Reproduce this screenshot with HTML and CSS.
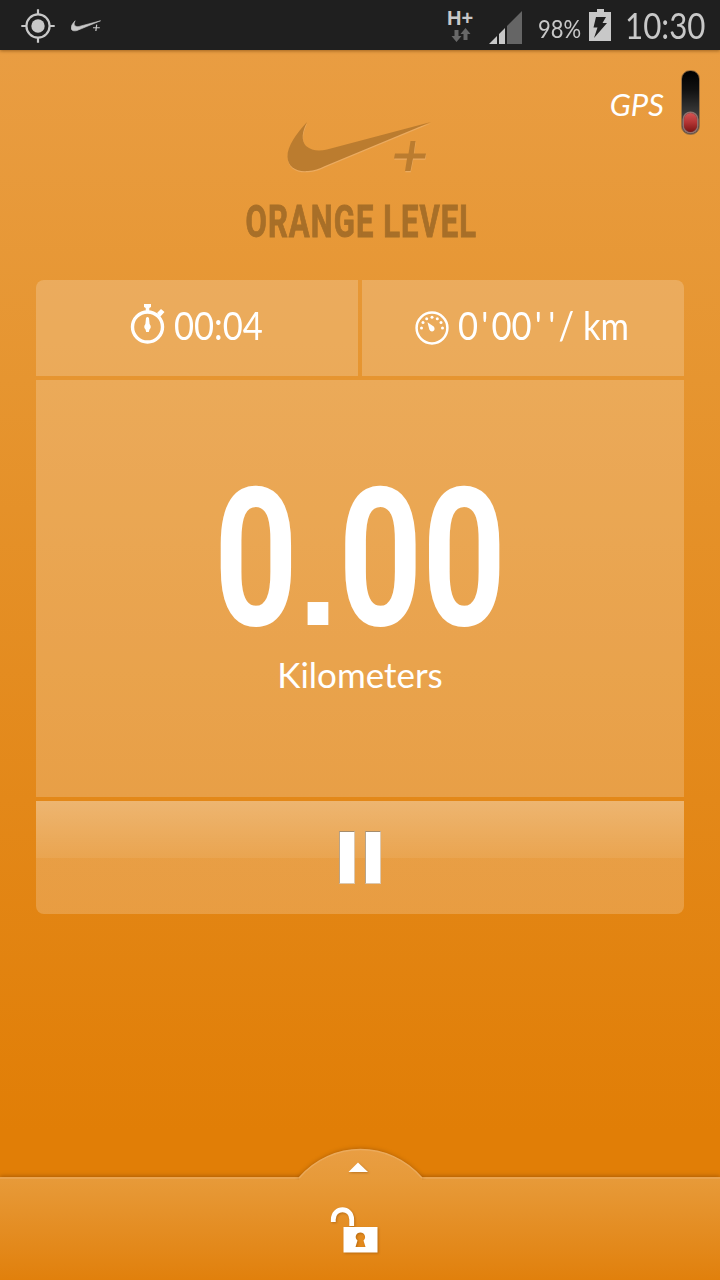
FILE: index.html
```
<!DOCTYPE html>
<html lang="en">
<head>
    <meta charset="UTF-8" />
    <meta name="viewport" content="width=device-width, initial-scale=1.0" />
    <title>Run Tracker</title>
    <link rel="stylesheet" href="styles.css">
</head>
<body>
    <div class="status-bar">
        <svg class="icon-location" width="34" height="34" viewBox="0 0 34 34">
            <circle cx="17" cy="17" r="11.6" fill="none" stroke="#c8c8c8" stroke-width="2.2" />
            <circle cx="17" cy="17" r="6.7" fill="#c8c8c8" />
            <path d="M17 .3v5M17 28.700v5M.3 17h5M28.700 17h5" stroke="#c8c8c8" stroke-width="2.200" />
        </svg>
        <svg class="icon-run" width="30" height="12" viewBox="287 121 146 53">
            <path d="M307 122C297 133 287 146 287.500 157C288 167 296 172 308 171C314 170.500 319 169 325 166L431 122L327 149.500C319 151.500 312 151 306 146C301 140 302 132 307 122Z" fill="#c8c8c8" stroke="#c8c8c8" stroke-width="3" />
            <path d="M412 141l-4 31M394 156h33" stroke="#c8c8c8" stroke-width="6" />
        </svg>
        <div class="network">
            <span class="network-type">H+</span>
            <svg width="20" height="14" viewBox="0 0 20 14">
                <path d="M3.500 2h4v6h3l-5 6-5-6h3zM12.500 12h4V6h3l-5-6-5 6h3z" fill="#686868" />
            </svg>
        </div>
        <svg class="icon-signal" width="33" height="33" viewBox="0 0 33 33">
            <path d="M0 33L8 25V33ZM10 23L16 17V33H10Z" fill="#c8c8c8" />
            <path d="M18 15L33 0V33H18Z" fill="#656565" />
        </svg>
        <div class="battery-level"><span>98%</span></div>
        <svg class="icon-battery" width="22" height="32" viewBox="0 0 22 32">
            <path d="M0 3H8V0H15V3H22V32H0Z" fill="#c8c8c8" />
            <path d="M7 8H17L13.500 14H18L5 29L8.500 18.500H4.500Z" fill="#1f1f1f" />
        </svg>
        <div class="clock"><span>10:30</span></div>
    </div>

    <div class="hero">
        <div class="gps">
            <span class="gps-label">GPS</span>
            <div class="gps-meter"><div class="gps-light"></div></div>
        </div>
        <svg class="logo" width="148" height="56" viewBox="286 119 148 56">
            <g class="logo-highlight" transform="translate(.3 1.200)">
                <path d="M307 122C297 133 287 146 287.500 157C288 167 296 172 308 171C314 170.500 319 169 325 166L431 122L327 149.500C319 151.500 312 151 306 146C301 140 302 132 307 122Z" />
                <path d="M410.500 141H415.500L413.800 153.500H426L425 158.500H413L410.500 171H405L407 158.500H394L395 153.500H408.500Z" />
            </g>
            <g fill="#bb7c2f">
                <path d="M307 122C297 133 287 146 287.500 157C288 167 296 172 308 171C314 170.500 319 169 325 166L431 122L327 149.500C319 151.500 312 151 306 146C301 140 302 132 307 122Z" />
                <path d="M410.500 141H415.500L413.800 153.500H426L425 158.500H413L410.500 171H405L407 158.500H394L395 153.500H408.500Z" />
            </g>
        </svg>
        <div class="level"><span>ORANGE LEVEL</span></div>
    </div>

    <div class="card">
        <div class="stats">
            <div class="stat time">
                <svg width="36" height="42" viewBox="0 0 36 42">
                    <circle cx="17.500" cy="24" r="15" fill="none" stroke="#fff" stroke-width="3.400" />
                    <path d="M14 1H21V4L19.300 5V8H15.700V5L14 4ZM27 10L31 6L34.500 9L30 14Z" fill="#fff" />
                    <path d="M16 15Q17.500 13 19 15L19.600 21Q22 24 19.500 26.500L18.800 29H16.200L15.500 26.500Q13 24 15.400 21Z" fill="#fff" />
                </svg>
                <span class="value">00:04</span>
            </div>
            <div class="stat pace">
                <svg width="34" height="34" viewBox="0 0 34 34">
                    <circle cx="17" cy="17" r="15.400" fill="none" stroke="#fff" stroke-width="2.500" />
                    <g fill="#fff">
                        <circle cx="6.500" cy="17" r="1.500" />
                        <circle cx="8" cy="11.500" r="1.500" />
                        <circle cx="11.700" cy="7.700" r="1.500" />
                        <circle cx="17" cy="6.200" r="1.500" />
                        <circle cx="22.300" cy="7.700" r="1.500" />
                        <circle cx="26" cy="11.500" r="1.500" />
                        <circle cx="27.500" cy="17" r="1.500" />
                        <path d="M12.500 11.200L19 15.800Q20.500 19 18 20.300Q15.500 21 14.300 18.500Z" />
                    </g>
                </svg>
                <span class="value">0<i>'</i>00<i>'</i><i>'</i>/ km</span>
            </div>
        </div>
        <div class="distance">
            <div class="distance-value">0<span class="point">.</span>00</div>
            <div class="distance-unit"><span>Kilometers</span></div>
        </div>
        <div class="pause">
            <div class="pause-bar"></div>
            <div class="pause-bar"></div>
        </div>
    </div>

    <div class="drawer">
        <svg class="drawer-tab" width="144" height="36" viewBox="288 1144 144 36">
            <defs>
                <linearGradient id="tab" x1="0" y1="0" x2="0" y2="1">
                    <stop offset="0" stop-color="#e99e43" />
                    <stop offset="1" stop-color="#e79a39" />
                </linearGradient>
            </defs>
            <path class="tab-shape" d="M299 1178C332 1140 389 1140 422 1178V1180H299Z" fill="url(#tab)" />
            <path d="M299 1178C332 1140 389 1140 422 1178" fill="none" stroke="#ebaa5b" stroke-width="1.500" />
            <path class="arrow" d="M348.500 1172L358 1162.500L368 1172Z" fill="#fff" />
        </svg>
        <svg class="icon-unlock" width="50" height="48" viewBox="0 0 50 48">
            <path d="M3.300 15V12.500C3.300 -.5 21.700 -.5 21.700 12.500V19" fill="none" stroke="#fff" stroke-width="4.800" />
            <path d="M13.500 20H47.500V45.500H13.500ZM27.500 33.500L25.500 40H35.500L33.500 33.500C37 30.500 34.500 25.500 30.500 25.500C26 25.500 24 30.500 27.500 33.500Z" fill="#fff" fill-rule="evenodd" />
        </svg>
    </div>
</body>
</html>
```

FILE: styles.css
```
* {
    box-sizing: border-box;
}
body {
    margin: 0;
    width: 720px;
    height: 1280px;
    overflow: hidden;
    display: flex;
    flex-direction: column;
    font-family: Lato, "Open Sans", sans-serif;
    color: #fff;
    background: linear-gradient(#e99d42 50px, #e69530 380px, #e38819 800px, #e17e06 1130px);
}
svg {
    display: block;
    flex: none;
}
span {
    display: inline-block;
    white-space: nowrap;
}

/* status bar */
.status-bar {
    height: 50px;
    flex: none;
    display: flex;
    align-items: flex-start;
    background: #1f1f1f;
    color: #c8c8c8;
    box-shadow: 0 1px 3px rgba(90, 50, 0, 0.5);
}
.icon-location {
    margin: 9px 0 0 21px;
}
.icon-run {
    margin: 20px 0 0 16px;
}
.network {
    width: 28px;
    margin: 8px 0 0 346px;
}
.network-type {
    font: bold 20px/20px "Liberation Sans", sans-serif;
}
.network svg {
    margin: 0 0 0 4px;
}
.icon-signal {
    margin: 11px 0 0 14px;
}
.battery-level {
    width: 44px;
    margin: 12px 0 0 16px;
    font-size: 25px;
    line-height: 32px;
}
.battery-level span {
    transform: scaleX(0.88);
    transform-origin: left;
}
.icon-battery {
    margin: 9px 0 0 7px;
}
.clock {
    margin: 5px 0 0 14px;
    font-size: 36px;
    line-height: 40px;
}
.clock span {
    transform: scaleX(0.87);
    transform-origin: left;
}

/* level header */
.hero {
    height: 230px;
    flex: none;
    display: flex;
    flex-direction: column;
    align-items: center;
}
.gps {
    align-self: flex-end;
    display: flex;
    align-items: center;
    gap: 17px;
    height: 66px;
    margin: 19px 20px 0 0;
}
.gps-label {
    font-size: 31px;
    line-height: 36px;
    font-style: italic;
    padding-top: 3px;
}
.gps-meter {
    display: flex;
    align-items: flex-end;
    width: 19px;
    height: 65px;
    padding: 2px;
    border: 1px solid #9b7040;
    border-radius: 9px;
    background: linear-gradient(#000, #111 30%, #484848 80%);
}
.gps-light {
    width: 13px;
    height: 19px;
    border-radius: 7px;
    background: linear-gradient(#d65352, #b23433 50%, #7d1512);
    box-shadow: 0 0 0 1.5px #94706b;
}
.logo {
    margin-top: -16px;
}
.logo-highlight {
    fill: #ebab60;
}
.level {
    width: 360px;
    margin-top: 21px;
    font: bold 44px/52px Roboto, sans-serif;
    color: #a86f28;
    display: flex;
    justify-content: center;
}
.level span {
    transform: scaleX(0.705);
    letter-spacing: 1.5px;
    margin-left: 2px;
    -webkit-text-stroke: 0.9px #a86f28;
}

/* run stats */
.card {
    display: flex;
    flex-direction: column;
    gap: 4px;
    width: 648px;
    height: 634px;
    flex: none;
    margin: 0 auto;
    border-radius: 8px;
    overflow: hidden;
}
.stats {
    display: grid;
    grid-template-columns: 1fr 1fr;
    gap: 4px;
    height: 96px;
}
.stat {
    display: flex;
    align-items: flex-start;
    background: rgba(255, 255, 255, 0.2);
}
.time svg {
    margin: 23px 0 0 94px;
}
.pace svg {
    margin: 31px 0 0 53px;
}
.value {
    font-size: 38px;
    line-height: 46px;
    margin: 22px 0 0 8px;
    transform: scaleX(0.91);
    transform-origin: left;
}
.pace .value {
    margin-left: 9px;
}
.value i {
    font-style: normal;
    padding: 0 3.5px;
}
.distance {
    height: 417px;
    background: rgba(255, 255, 255, 0.2);
    text-align: center;
}
.distance-value {
    height: 180px;
    margin-top: 88px;
    font: bold 193px/180px Roboto, sans-serif;
    transform: scaleX(0.757);
}
/* square decimal point, squashed down to the baseline */
.point {
    font-family: "Liberation Sans", sans-serif;
    transform: scaleY(0.8);
    transform-origin: 0 157px;
}
.distance-unit {
    margin-top: 3px;
    font-size: 35px;
    line-height: 46px;
}
.pause {
    height: 113px;
    display: flex;
    justify-content: center;
    gap: 10px;
    padding-top: 30px;
    background: linear-gradient(rgba(255, 255, 255, 0.38), rgba(255, 255, 255, 0.25) 57px, rgba(255, 255, 255, 0.2) 57px);
}
.pause-bar {
    width: 16px;
    height: 53px;
    background: #fff;
    border: 1px solid #dcc8af;
    border-top-color: #a58c6c;
    border-left-color: #b8a48a;
}

/* bottom drawer */
.drawer {
    position: relative;
    height: 103px;
    flex: none;
    margin-top: auto;
    display: flex;
    justify-content: center;
    padding-top: 28px;
    border-top: 2px solid #e9a34e;
    background: linear-gradient(#e79a39, #e1800c);
    box-shadow: 0 -1px 4px rgba(120, 60, 0, 0.5);
}
.drawer-tab {
    position: absolute;
    left: 288px;
    top: -35px;
}
.tab-shape {
    filter: drop-shadow(0 -1px 2px rgba(120, 60, 0, 0.45));
}
.arrow,
.icon-unlock {
    filter: drop-shadow(1px 1px 1px rgba(120, 60, 0, 0.4));
}
.icon-unlock {
    margin-right: 11px;
}
```
